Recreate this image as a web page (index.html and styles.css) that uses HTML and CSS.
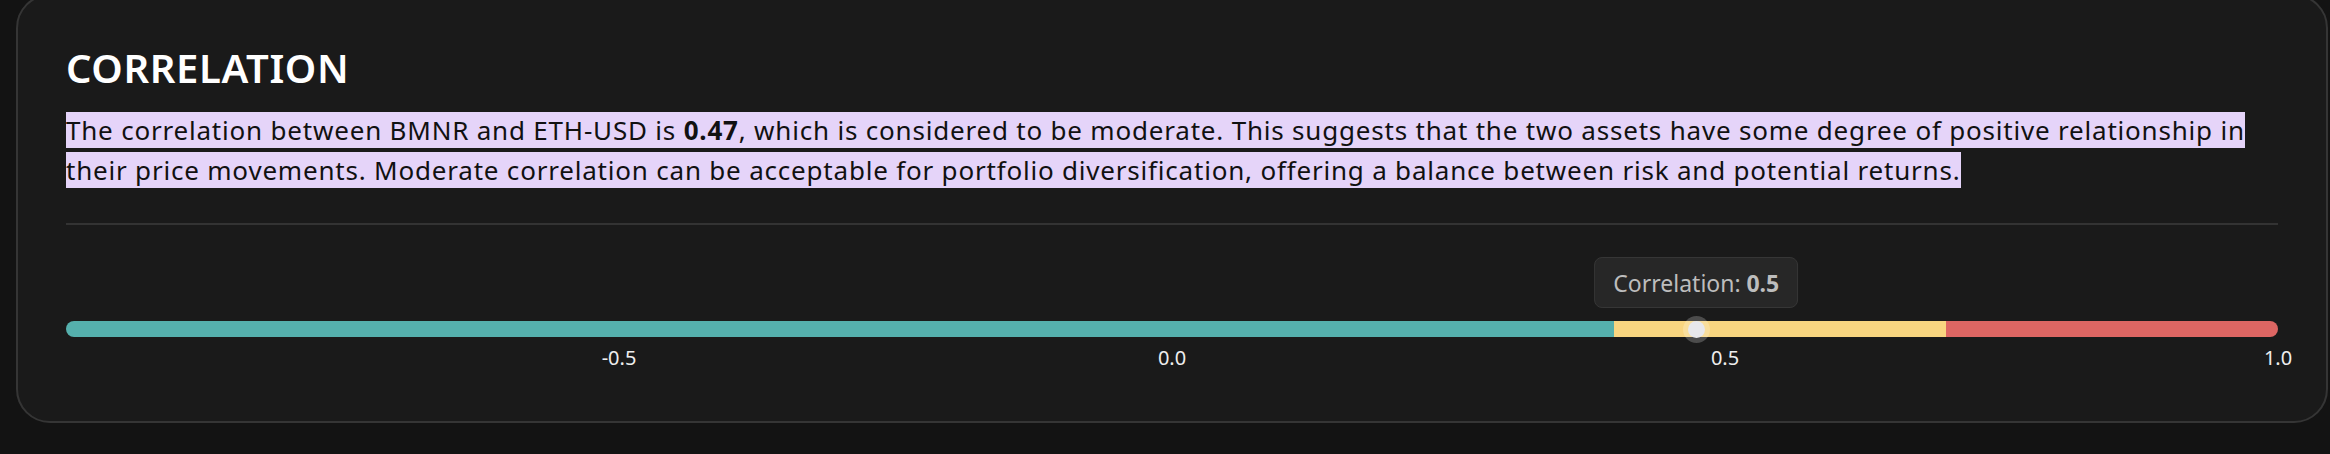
FILE: index.html
```html
<!DOCTYPE html>
<html lang="en">
<head>
<meta charset="utf-8">
<title>Correlation</title>
<link rel="stylesheet" href="styles.css">
</head>
<body>
<section class="card">
  <h2 class="title">CORRELATION</h2>
  <p class="summary"><span class="hl">The correlation between BMNR and ETH-USD is <strong>0.47</strong>, which is considered to be moderate. This suggests that the two assets have some degree of positive relationship in their price movements. Moderate correlation can be acceptable for portfolio diversification, offering a balance between risk and potential returns.</span></p>
  <div class="divider"></div>
  <div class="scale">
    <div class="track">
      <div class="bar">
        <div class="seg seg-low" style="flex: 70"></div>
        <div class="seg seg-mid" style="flex: 15"></div>
        <div class="seg seg-high" style="flex: 15"></div>
      </div>
      <div class="marker" style="left: 73.7%">
        <div class="tip">Correlation: <b>0.5</b></div>
        <div class="thumb"></div>
      </div>
    </div>
    <div class="ticks">
      <span class="tick">-0.5</span>
      <span class="tick">0.0</span>
      <span class="tick">0.5</span>
      <span class="tick">1.0</span>
    </div>
  </div>
</section>
</body>
</html>
```

FILE: styles.css
```css
html, body {
  margin: 0;
  padding: 0;
  background: #131313;
}

body {
  font-family: "Noto Sans", "Open Sans", sans-serif;
  color: #fff;
}

.card {
  margin: -6px 2px 0 16px;
  border: 2px solid #353535;
  border-radius: 34px;
  background: #1a1a1a;
  padding: 48px 48px 51px;
}

.title {
  margin: 0;
  font-size: 40px;
  line-height: 48px;
  font-weight: 600;
  color: #fff;
  letter-spacing: 0.6px;
}

.summary {
  margin: 18px 0 0;
  font-size: 26px;
  line-height: 40px;
  letter-spacing: 0.8px;
  color: #111;
}

.hl {
  background: #e5d4f9;
}

.summary strong {
  font-weight: 700;
}

.divider {
  margin-top: 33px;
  height: 2px;
  background: #333;
}

.scale {
  padding-top: 96px;
}

.track {
  position: relative;
  height: 16px;
}

.bar {
  display: flex;
  height: 100%;
  border-radius: 8px;
  overflow: hidden;
}

.seg-low { background: #55b0ad; }
.seg-mid { background: #f8d580; }
.seg-high { background: #dd6663; }

.marker {
  position: absolute;
  top: 50%;
  width: 0;
  height: 0;
}

.thumb {
  position: absolute;
  left: -8.5px;
  top: -8.5px;
  width: 17px;
  height: 17px;
  border-radius: 50%;
  background: #e8e8ec;
  box-shadow: 0 0 0 5px rgba(255, 255, 255, 0.22);
}

.tip {
  position: absolute;
  bottom: 21px;
  left: 0;
  transform: translateX(-50%);
  white-space: nowrap;
  padding: 0 18px;
  height: 49px;
  display: flex;
  align-items: center;
  background: #272727;
  border: 1px solid #363636;
  border-radius: 8px;
  color: #bdbdbd;
  font-size: 23px;
}

.tip b {
  font-weight: 700;
  margin-left: 0.25em;
}

.ticks {
  display: grid;
  grid-template-columns: repeat(4, 1fr);
  margin-top: 9px;
  font-size: 20px;
  line-height: 24px;
  color: #eee;
}

.tick {
  justify-self: end;
  transform: translateX(50%);
}
```
